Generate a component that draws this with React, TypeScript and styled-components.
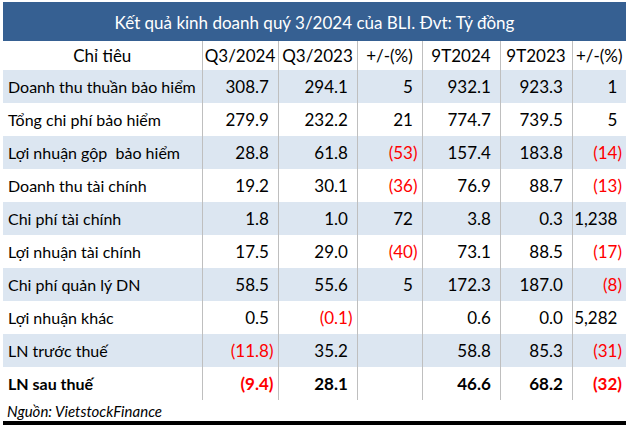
import React from 'react';
import styled, {createGlobalStyle} from 'styled-components';

const GlobalStyle = createGlobalStyle`
	html, body {
		margin: 0;
		padding: 0;
		background: #ffffff;
	}
	body {
		font-family: Lato, "Noto Sans", "Liberation Sans", sans-serif;
		color: #000000;
	}
`;

const Page = styled.div`
	width: 628px;
	height: 425px;
	padding: 2px 2px 0 3px;
	box-sizing: border-box;
	display: flex;
	flex-direction: column;
	overflow: hidden;
`;

const Banner = styled.div`
	height: 39px;
	background: #366092;
	color: #ffffff;
	font-size: 17px;
	display: flex;
	align-items: center;
	justify-content: center;
	padding-top: 1px;
	box-sizing: border-box;
`;

const Table = styled.table`
	border-collapse: collapse;
	table-layout: fixed;
	width: 623px;
	font-size: 17px;
`;

const HeadRow = styled.tr`
	height: 29px;
`;

const Row = styled.tr<{$band: boolean; $bold?: boolean}>`
	height: 33px;
	background: ${p => (p.$band ? '#dce6f1' : '#ffffff')};
	font-weight: ${p => (p.$bold ? 700 : 400)};
`;

const HeadCell = styled.th`
	font-weight: 400;
	text-align: center;
	padding: 0;
	border-left: 1px solid #bfbfbf;

	&:first-child {
		border-left: none;
	}
`;

const LabelCell = styled.td`
	text-align: left;
	padding: 0 0 0 5px;
	font-size: 16px;
	white-space: pre;
`;

const NumCell = styled.td<{$neg?: boolean}>`
	text-align: right;
	padding: 0 4px 0 0;
	border-left: 1px solid #bfbfbf;
	white-space: nowrap;
	color: ${p => (p.$neg ? '#ff0000' : '#000000')};
`;

// khoảng trống cho dấu ")" như định dạng kế toán của Excel
const Paren = styled.span`
	visibility: hidden;
`;

const Footer = styled.div`
	height: 21px;
	display: flex;
	align-items: center;
	padding-left: 4px;
	font-size: 15px;
	font-style: italic;
`;

const BottomRule = styled.div`
	height: 4px;
	background: #000000;
`;

type Value = string | null;

interface Line {
	label: string;
	values: Value[];
	bold?: boolean;
}

const columns = ['Chỉ tiêu', 'Q3/2024', 'Q3/2023', '+/-(%)', '9T2024', '9T2023', '+/-(%)'];
const widths = [199, 76, 79, 65, 78, 72, 54];

const lines: Line[] = [
	{label: 'Doanh thu thuần bảo hiểm', values: ['308.7', '294.1', '5', '932.1', '923.3', '1']},
	{label: 'Tổng chi phí bảo hiểm', values: ['279.9', '232.2', '21', '774.7', '739.5', '5']},
	{label: 'Lợi nhuận gộp  bảo hiểm', values: ['28.8', '61.8', '(53)', '157.4', '183.8', '(14)']},
	{label: 'Doanh thu tài chính', values: ['19.2', '30.1', '(36)', '76.9', '88.7', '(13)']},
	{label: 'Chi phí tài chính', values: ['1.8', '1.0', '72', '3.8', '0.3', '1,238']},
	{label: 'Lợi nhuận tài chính', values: ['17.5', '29.0', '(40)', '73.1', '88.5', '(17)']},
	{label: 'Chi phí quản lý DN', values: ['58.5', '55.6', '5', '172.3', '187.0', '(8)']},
	{label: 'Lợi nhuận khác', values: ['0.5', '(0.1)', null, '0.6', '0.0', '5,282']},
	{label: 'LN trước thuế', values: ['(11.8)', '35.2', null, '58.8', '85.3', '(31)']},
	{label: 'LN sau thuế', values: ['(9.4)', '28.1', null, '46.6', '68.2', '(32)'], bold: true},
];

function NumberCell({value}: {value: Value}) {
	if (value === null) return <NumCell />;
	const neg = value.startsWith('(');
	return (
		<NumCell $neg={neg}>
			{value}
			{!neg && <Paren>)</Paren>}
		</NumCell>
	);
}

export default function App() {
	return (
		<Page>
			<GlobalStyle />
			<Banner>Kết quả kinh doanh quý 3/2024 của BLI. Đvt: Tỷ đồng</Banner>
			<Table>
				<colgroup>
					{widths.map((w, i) => (
						<col key={i} style={{width: w}} />
					))}
				</colgroup>
				<thead>
					<HeadRow>
						{columns.map((c, i) => (
							<HeadCell key={i}>{c}</HeadCell>
						))}
					</HeadRow>
				</thead>
				<tbody>
					{lines.map((line, i) => (
						<Row key={line.label} $band={i % 2 === 0} $bold={line.bold}>
							<LabelCell>{line.label}</LabelCell>
							{line.values.map((v, j) => (
								<NumberCell key={j} value={v} />
							))}
						</Row>
					))}
				</tbody>
			</Table>
			<Footer>Nguồn: VietstockFinance</Footer>
			<BottomRule />
		</Page>
	);
}
